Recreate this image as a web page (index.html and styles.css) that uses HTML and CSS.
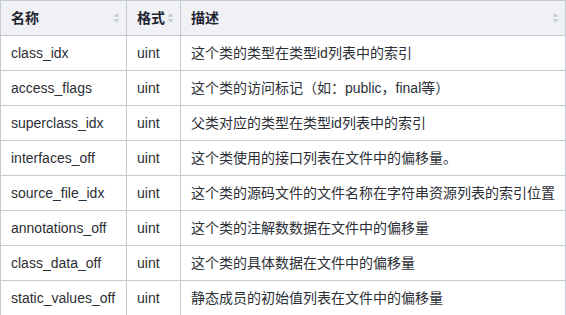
FILE: index.html
```html
<!DOCTYPE html>
<html lang="zh">
<head>
<meta charset="utf-8">
<title>table</title>
<link rel="stylesheet" href="styles.css">
</head>
<body>
<table class="grid">
  <colgroup>
    <col class="c1"><col class="c2"><col class="c3">
  </colgroup>
  <thead>
    <tr>
      <th><div class="hcell"><span>名称</span><svg class="sort" width="7" height="10" viewBox="0 0 7 10"><path d="M3.5 0.5 L6.5 3.8 L0.5 3.8 Z M3.5 9.5 L6.5 6.2 L0.5 6.2 Z"/></svg></div></th>
      <th><div class="hcell"><span>格式</span><svg class="sort" width="7" height="10" viewBox="0 0 7 10"><path d="M3.5 0.5 L6.5 3.8 L0.5 3.8 Z M3.5 9.5 L6.5 6.2 L0.5 6.2 Z"/></svg></div></th>
      <th><div class="hcell"><span>描述</span><svg class="sort" width="7" height="10" viewBox="0 0 7 10"><path d="M3.5 0.5 L6.5 3.8 L0.5 3.8 Z M3.5 9.5 L6.5 6.2 L0.5 6.2 Z"/></svg></div></th>
    </tr>
  </thead>
  <tbody>
    <tr><td>class_idx</td><td>uint</td><td>这个类的类型在类型id列表中的索引</td></tr>
    <tr><td>access_flags</td><td>uint</td><td>这个类的访问标记（如：public，final等）</td></tr>
    <tr><td>superclass_idx</td><td>uint</td><td>父类对应的类型在类型id列表中的索引</td></tr>
    <tr><td>interfaces_off</td><td>uint</td><td>这个类使用的接口列表在文件中的偏移量。</td></tr>
    <tr><td>source_file_idx</td><td>uint</td><td>这个类的源码文件的文件名称在字符串资源列表的索引位置</td></tr>
    <tr><td>annotations_off</td><td>uint</td><td>这个类的注解数数据在文件中的偏移量</td></tr>
    <tr><td>class_data_off</td><td>uint</td><td>这个类的具体数据在文件中的偏移量</td></tr>
    <tr><td>static_values_off</td><td>uint</td><td>静态成员的初始值列表在文件中的偏移量</td></tr>
  </tbody>
</table>
</body>
</html>
```

FILE: styles.css
```css
html, body {
  margin: 0;
  padding: 0;
  background: #ffffff;
}

.grid {
  border-collapse: collapse;
  table-layout: fixed;
  width: 565px;
  font-family: "Liberation Sans", "Noto Sans CJK SC", sans-serif;
  font-size: 14px;
  color: #2b2f36;
}

.c1 { width: 126px; }
.c2 { width: 54px; }
.c3 { width: 385px; }

.grid th,
.grid td {
  border: 1px solid #c5c9d1;
  padding: 7px 6px 7px 10px;
  line-height: 20px;
  text-align: left;
  white-space: nowrap;
  overflow: hidden;
}

.grid th {
  background: #eff1f5;
  font-weight: bold;
  color: #1f2530;
}

.hcell {
  display: flex;
  align-items: center;
  justify-content: space-between;
}

.sort {
  fill: #c3c7ce;
  flex: none;
}
```
